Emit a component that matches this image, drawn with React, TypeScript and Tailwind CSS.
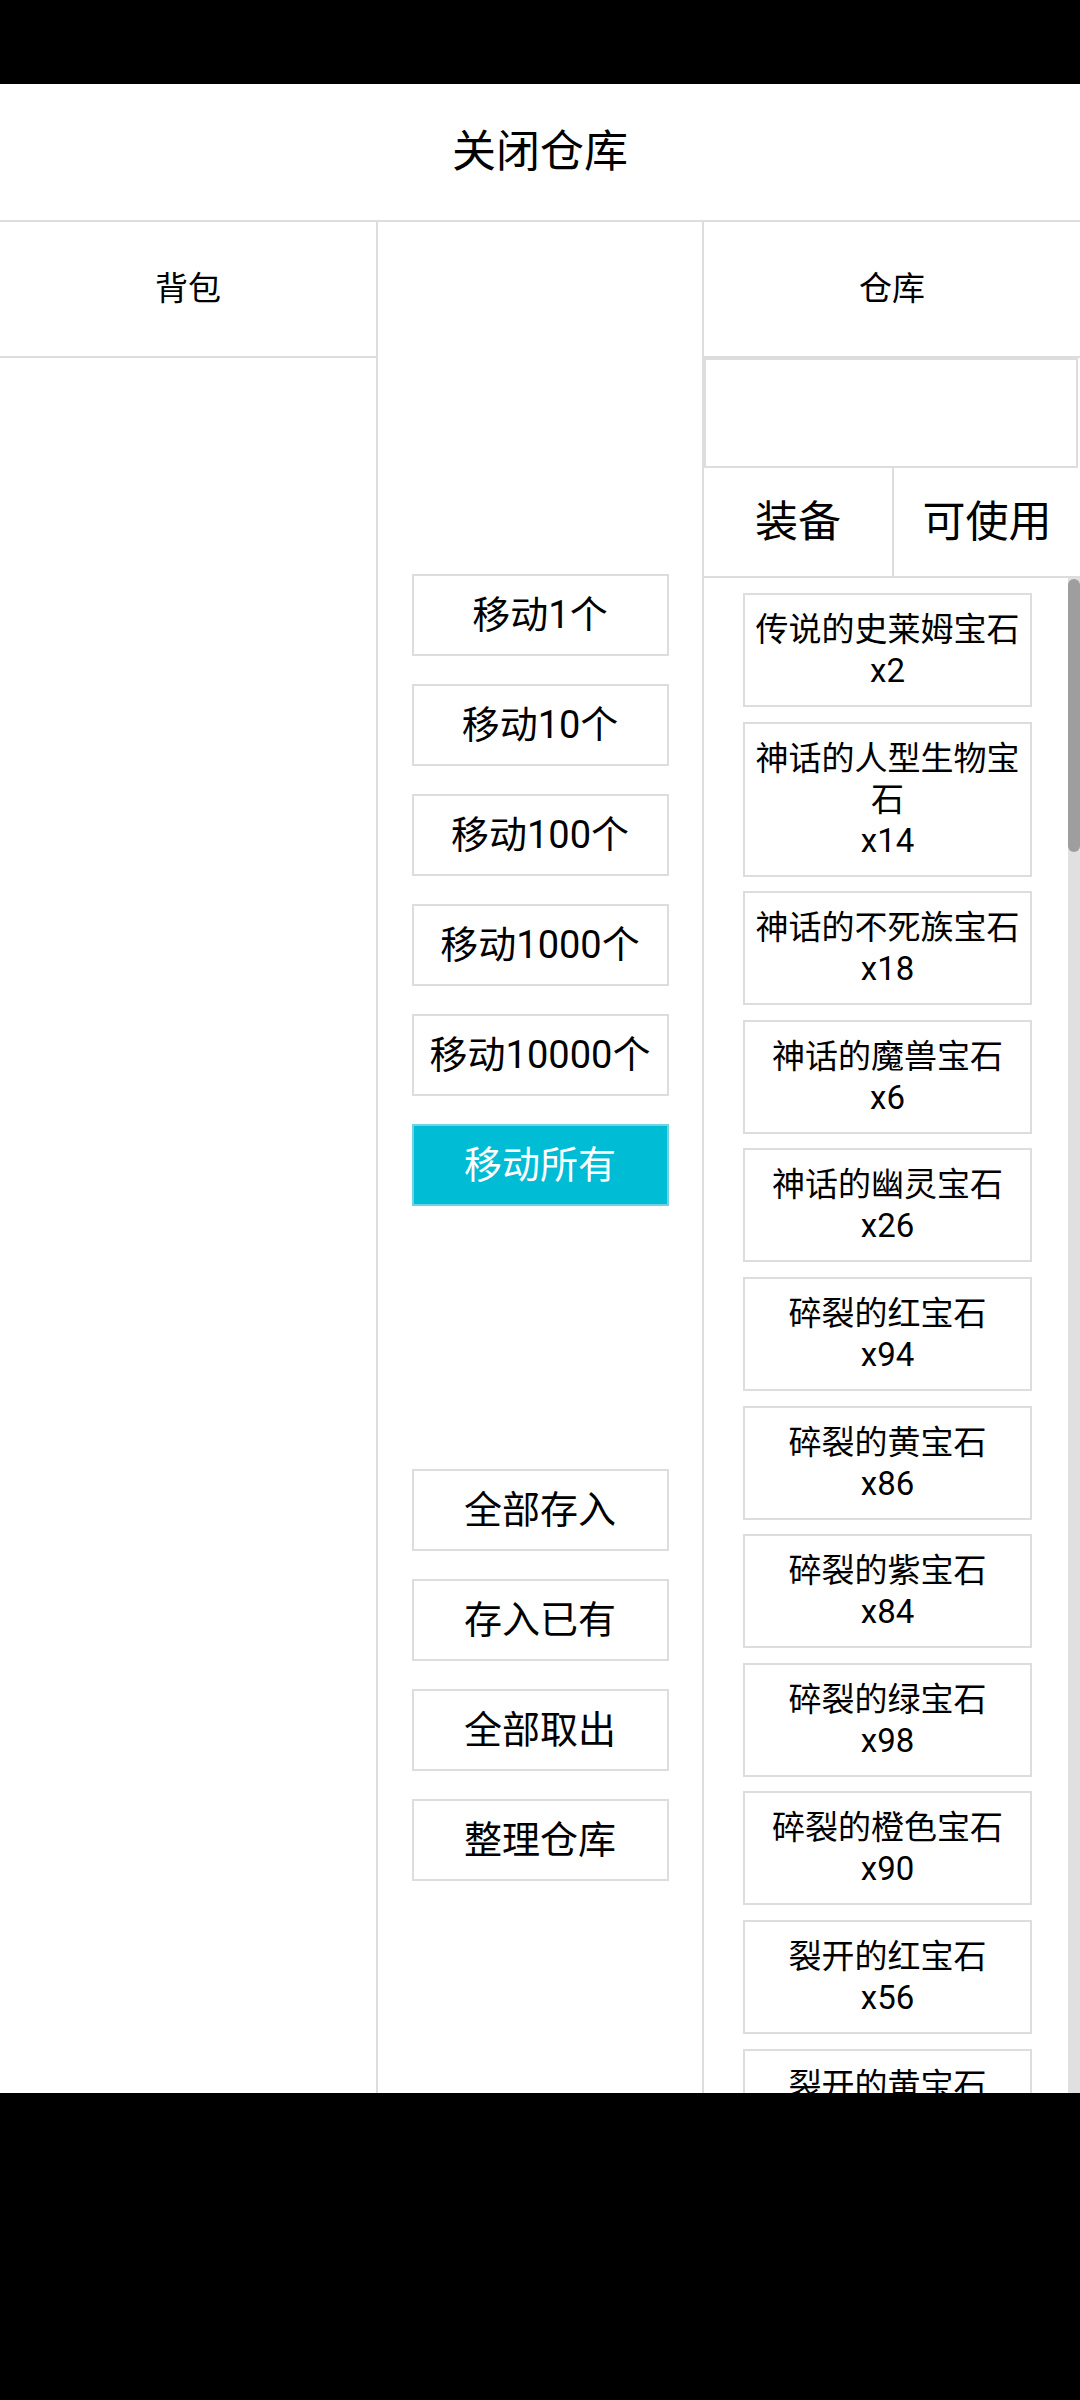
const FONT = "font-['Roboto','Noto_Sans_CJK_SC',sans-serif]";

const MOVE_BUTTONS = ["移动1个", "移动10个", "移动100个", "移动1000个", "移动10000个"];
const BULK_BUTTONS = ["全部存入", "存入已有", "全部取出", "整理仓库"];

const ITEMS: { name: string; count: number }[] = [
  { name: "传说的史莱姆宝石", count: 2 },
  { name: "神话的人型生物宝石", count: 14 },
  { name: "神话的不死族宝石", count: 18 },
  { name: "神话的魔兽宝石", count: 6 },
  { name: "神话的幽灵宝石", count: 26 },
  { name: "碎裂的红宝石", count: 94 },
  { name: "碎裂的黄宝石", count: 86 },
  { name: "碎裂的紫宝石", count: 84 },
  { name: "碎裂的绿宝石", count: 98 },
  { name: "碎裂的橙色宝石", count: 90 },
  { name: "裂开的红宝石", count: 56 },
  { name: "裂开的黄宝石", count: 72 },
];

function ActionButton({ label, active = false }: { label: string; active?: boolean }) {
  return (
    <button
      className={
        active
          ? "flex h-[82px] w-[257px] items-center justify-center border-2 border-[#6fd3e2] bg-[#00bcd4] text-[38px] text-white"
          : "flex h-[82px] w-[257px] items-center justify-center border-2 border-[#dddddd] bg-white text-[38px] text-black"
      }
    >
      {label}
    </button>
  );
}

// card pitch in the list is ~128.6px, hence the fractional gap
function ItemCard({ name, count }: { name: string; count: number }) {
  return (
    <div className="mb-[14.6px] w-[289px] shrink-0 border-2 border-[#dddddd] bg-white px-[6px] py-[14px] text-center text-[33px] leading-[41px] text-black">
      <div>{name}</div>
      <div>x{count}</div>
    </div>
  );
}

export default function App() {
  return (
    <div className={`h-[2400px] w-[1080px] bg-black pt-[84px] ${FONT}`}>
      <div className="flex h-[2009px] flex-col overflow-hidden bg-white">
        {/* top bar */}
        <div className="flex h-[138px] shrink-0 items-center justify-center border-b-2 border-[#dddddd] text-[44px] text-black">
          关闭仓库
        </div>

        <div className="flex min-h-0 flex-1">
          {/* bag */}
          <div className="flex w-[378px] shrink-0 flex-col border-r-2 border-[#dddddd]">
            <div className="flex h-[136px] items-center justify-center border-b-2 border-[#dddddd] text-[33px] text-black">
              背包
            </div>
          </div>

          {/* actions */}
          <div className="flex w-[326px] shrink-0 flex-col items-center border-r-2 border-[#dddddd] pt-[352px]">
            <div className="flex flex-col gap-[28px]">
              {MOVE_BUTTONS.map((b) => (
                <ActionButton key={b} label={b} />
              ))}
              <ActionButton label="移动所有" active />
            </div>
            <div className="mt-[263px] flex flex-col gap-[28px]">
              {BULK_BUTTONS.map((b) => (
                <ActionButton key={b} label={b} />
              ))}
            </div>
          </div>

          {/* warehouse */}
          <div className="flex min-w-0 flex-1 flex-col">
            <div className="flex h-[136px] shrink-0 items-center justify-center border-b-2 border-[#dddddd] text-[33px] text-black">
              仓库
            </div>
            <div className="h-[110px] w-[374px] shrink-0 border-2 border-[#dddddd]" />
            <div className="flex h-[110px] shrink-0 border-b-2 border-[#dddddd]">
              <div className="flex w-[190px] items-center justify-center border-r-2 border-[#dddddd] text-[43px] text-black">
                装备
              </div>
              <div className="flex flex-1 items-center justify-center text-[43px] text-black">
                可使用
              </div>
            </div>
            <div className="flex min-h-0 flex-1">
              <div className="flex min-w-0 flex-1 flex-col overflow-hidden pl-[39px] pt-[15px]">
                {ITEMS.map((it) => (
                  <ItemCard key={it.name} name={it.name} count={it.count} />
                ))}
              </div>
              <div className="flex w-[12px] shrink-0 flex-col bg-[#e0e0e0] pt-[1px]">
                <div className="h-[273px] w-full rounded-full bg-[#9e9e9e]" />
              </div>
            </div>
          </div>
        </div>
      </div>
    </div>
  );
}
